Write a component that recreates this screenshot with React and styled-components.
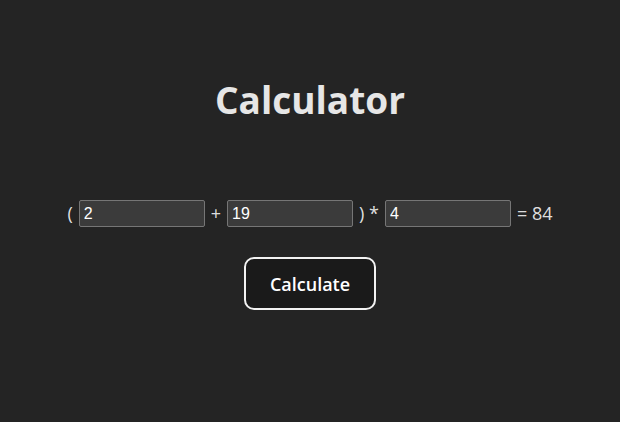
import React, { useState } from 'react'
import styled, { createGlobalStyle } from 'styled-components'

const GlobalStyle = createGlobalStyle`
  body {
    margin: 0;
    background: #242424;
    color: rgba(255, 255, 255, 0.87);
    font-family: 'Open Sans', 'Noto Sans', sans-serif;
  }
`

function App () {
  const [a, setA] = useState('2')
  const [b, setB] = useState('19')
  const [c, setC] = useState('4')
  const [result, setResult] = useState(84)

  const calculate = () => {
    setResult((Number(a) + Number(b)) * Number(c))
  }

  return (
    <Page>
      <GlobalStyle />
      <Title>Calculator</Title>
      <Equation>
        <Sign>(</Sign>
        <NumberInput type='text' value={a} onChange={e => setA(e.target.value)} />
        <Sign>+</Sign>
        <NumberInput type='text' value={b} onChange={e => setB(e.target.value)} />
        <Sign>) *</Sign>
        <NumberInput type='text' value={c} onChange={e => setC(e.target.value)} />
        <Sign>= {result}</Sign>
      </Equation>
      <CalcButton onClick={calculate}>Calculate</CalcButton>
    </Page>
  )
}

export default App

const Page = styled.div`
  display: flex;
  flex-direction: column;
  align-items: center;
  padding-top: 75px;
`

const Title = styled.h1`
  margin: 0;
  font-size: 37px;
  font-weight: 700;
  line-height: 50px;
  color: #e6e6e6;
`

const Equation = styled.div`
  display: flex;
  align-items: center;
  gap: 6px;
  margin-top: 75px;
  font-size: 18px;
`

const Sign = styled.span`
  line-height: 27px;
`

const NumberInput = styled.input`
  box-sizing: border-box;
  width: 126px;
  height: 27px;
  padding: 0 4px;
  background: #3b3b3b;
  border: 1px solid #767676;
  border-radius: 2px;
  color: #fff;
  font-family: 'Liberation Sans', Arial, sans-serif;
  font-size: 16px;
`

const CalcButton = styled.button`
  margin-top: 30px;
  width: 132px;
  height: 53px;
  background: #1a1a1a;
  border: 2px solid #f2f2f2;
  border-radius: 10px;
  color: #fff;
  font-family: 'Open Sans', 'Noto Sans', sans-serif;
  font-size: 18px;
  font-weight: 600;
  cursor: pointer;
`
